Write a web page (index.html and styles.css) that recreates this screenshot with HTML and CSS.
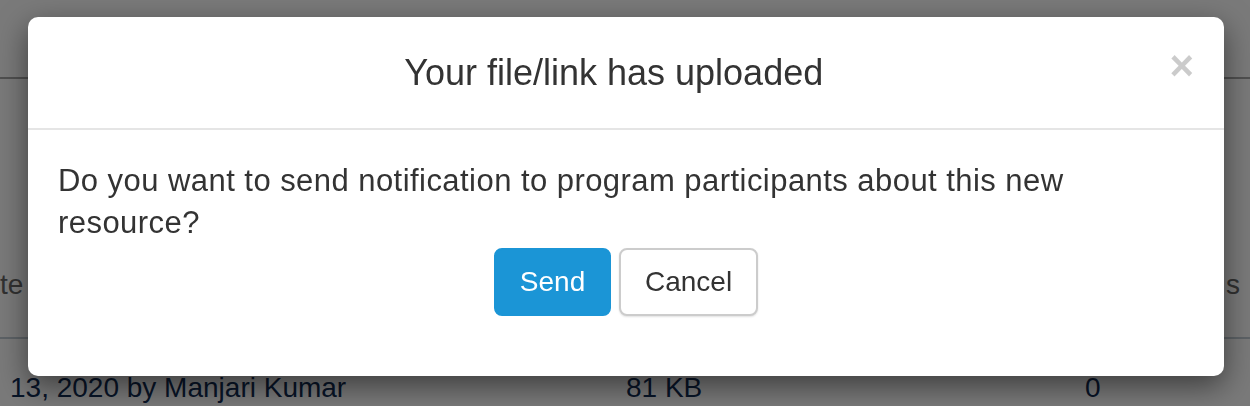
FILE: index.html
```html
<!DOCTYPE html>
<html>
<head>
<meta name="viewport" content="width=device-width, initial-scale=1">
<link rel="stylesheet" href="styles.css">
</head>
<body>

<div class="page">
  <div class="topbar"></div>
  <div class="thead">
    <div class="th th-date">te</div>
    <div class="th th-end">s</div>
  </div>
  <div class="trow">
    <div class="td td-date">13, 2020 by Manjari Kumar</div>
    <div class="td td-size">81 KB</div>
    <div class="td td-count">0</div>
  </div>
</div>

<div class="backdrop"></div>

<div class="modal">
  <div class="modal-header">
    <button class="close" type="button">&times;</button>
    <h4 class="modal-title">Your file/link has uploaded</h4>
  </div>
  <div class="modal-body">
    <p>Do you want to send notification to program participants about this new resource?</p>
    <div class="actions">
      <button class="btn btn-primary" type="button">Send</button>
      <button class="btn btn-default" type="button">Cancel</button>
    </div>
  </div>
</div>

</body>
</html>
```

FILE: styles.css
```css
html, body {
  margin: 0;
  padding: 0;
}

body {
  width: 1250px;
  height: 406px;
  overflow: hidden;
  background: #fff;
  font-family: "Liberation Sans", Arial, Helvetica, sans-serif;
  color: #333;
}

.topbar {
  height: 77px;
  border-bottom: 2px solid #a8a8a8;
}

.thead {
  display: flex;
  justify-content: space-between;
  align-items: flex-end;
  height: 258px;
  border-bottom: 2px solid #c3ccd6;
  font-size: 28px;
  color: #666;
}

.th {
  padding-bottom: 36px;
}

.th-end {
  padding-right: 10px;
}

.trow {
  display: flex;
  font-size: 28px;
  color: #122c55;
  padding-top: 33px;
}

.td-date {
  width: 616px;
  padding-left: 10px;
}

.td-size {
  width: 459px;
}

.backdrop {
  position: fixed;
  top: 0;
  left: 0;
  right: 0;
  bottom: 0;
  background: rgba(0, 0, 0, 0.52);
}

.modal {
  position: absolute;
  top: 17px;
  left: 28px;
  width: 1196px;
  height: 359px;
  box-sizing: border-box;
  background: #fff;
  border-radius: 10px;
  box-shadow: 0 10px 30px rgba(0, 0, 0, 0.5);
}

.modal-header {
  padding: 30px;
  border-bottom: 2px solid #e5e5e5;
  text-align: center;
}

.modal-title {
  margin: 0;
  font-size: 36px;
  font-weight: 500;
  line-height: 51px;
  color: #333;
}

.close {
  float: right;
  margin-top: -2px;
  padding: 0;
  border: 0;
  background: transparent;
  font-family: "Liberation Sans", Arial, sans-serif;
  font-size: 42px;
  font-weight: bold;
  line-height: 42px;
  color: #000;
  opacity: 0.2;
  cursor: pointer;
}

.modal-body {
  padding: 30px;
}

.modal-body p {
  margin: 0;
  font-size: 31px;
  line-height: 42px;
  letter-spacing: 0.45px;
}

.actions {
  margin-top: 4px;
  font-size: 28px;
  text-align: center;
}

.btn {
  display: inline-block;
  font-family: "Liberation Sans", Arial, sans-serif;
  font-size: 28px;
  line-height: 40px;
  padding: 12px 24px;
  border: 2px solid transparent;
  border-radius: 8px;
  cursor: pointer;
}

.btn-primary {
  background: #1b95d6;
  border-color: #1b95d6;
  color: #fff;
}

.btn-default {
  background: #fff;
  border-color: #cccccc;
  color: #333;
  box-shadow: 0 1px 2px rgba(0, 0, 0, 0.12);
}
```
